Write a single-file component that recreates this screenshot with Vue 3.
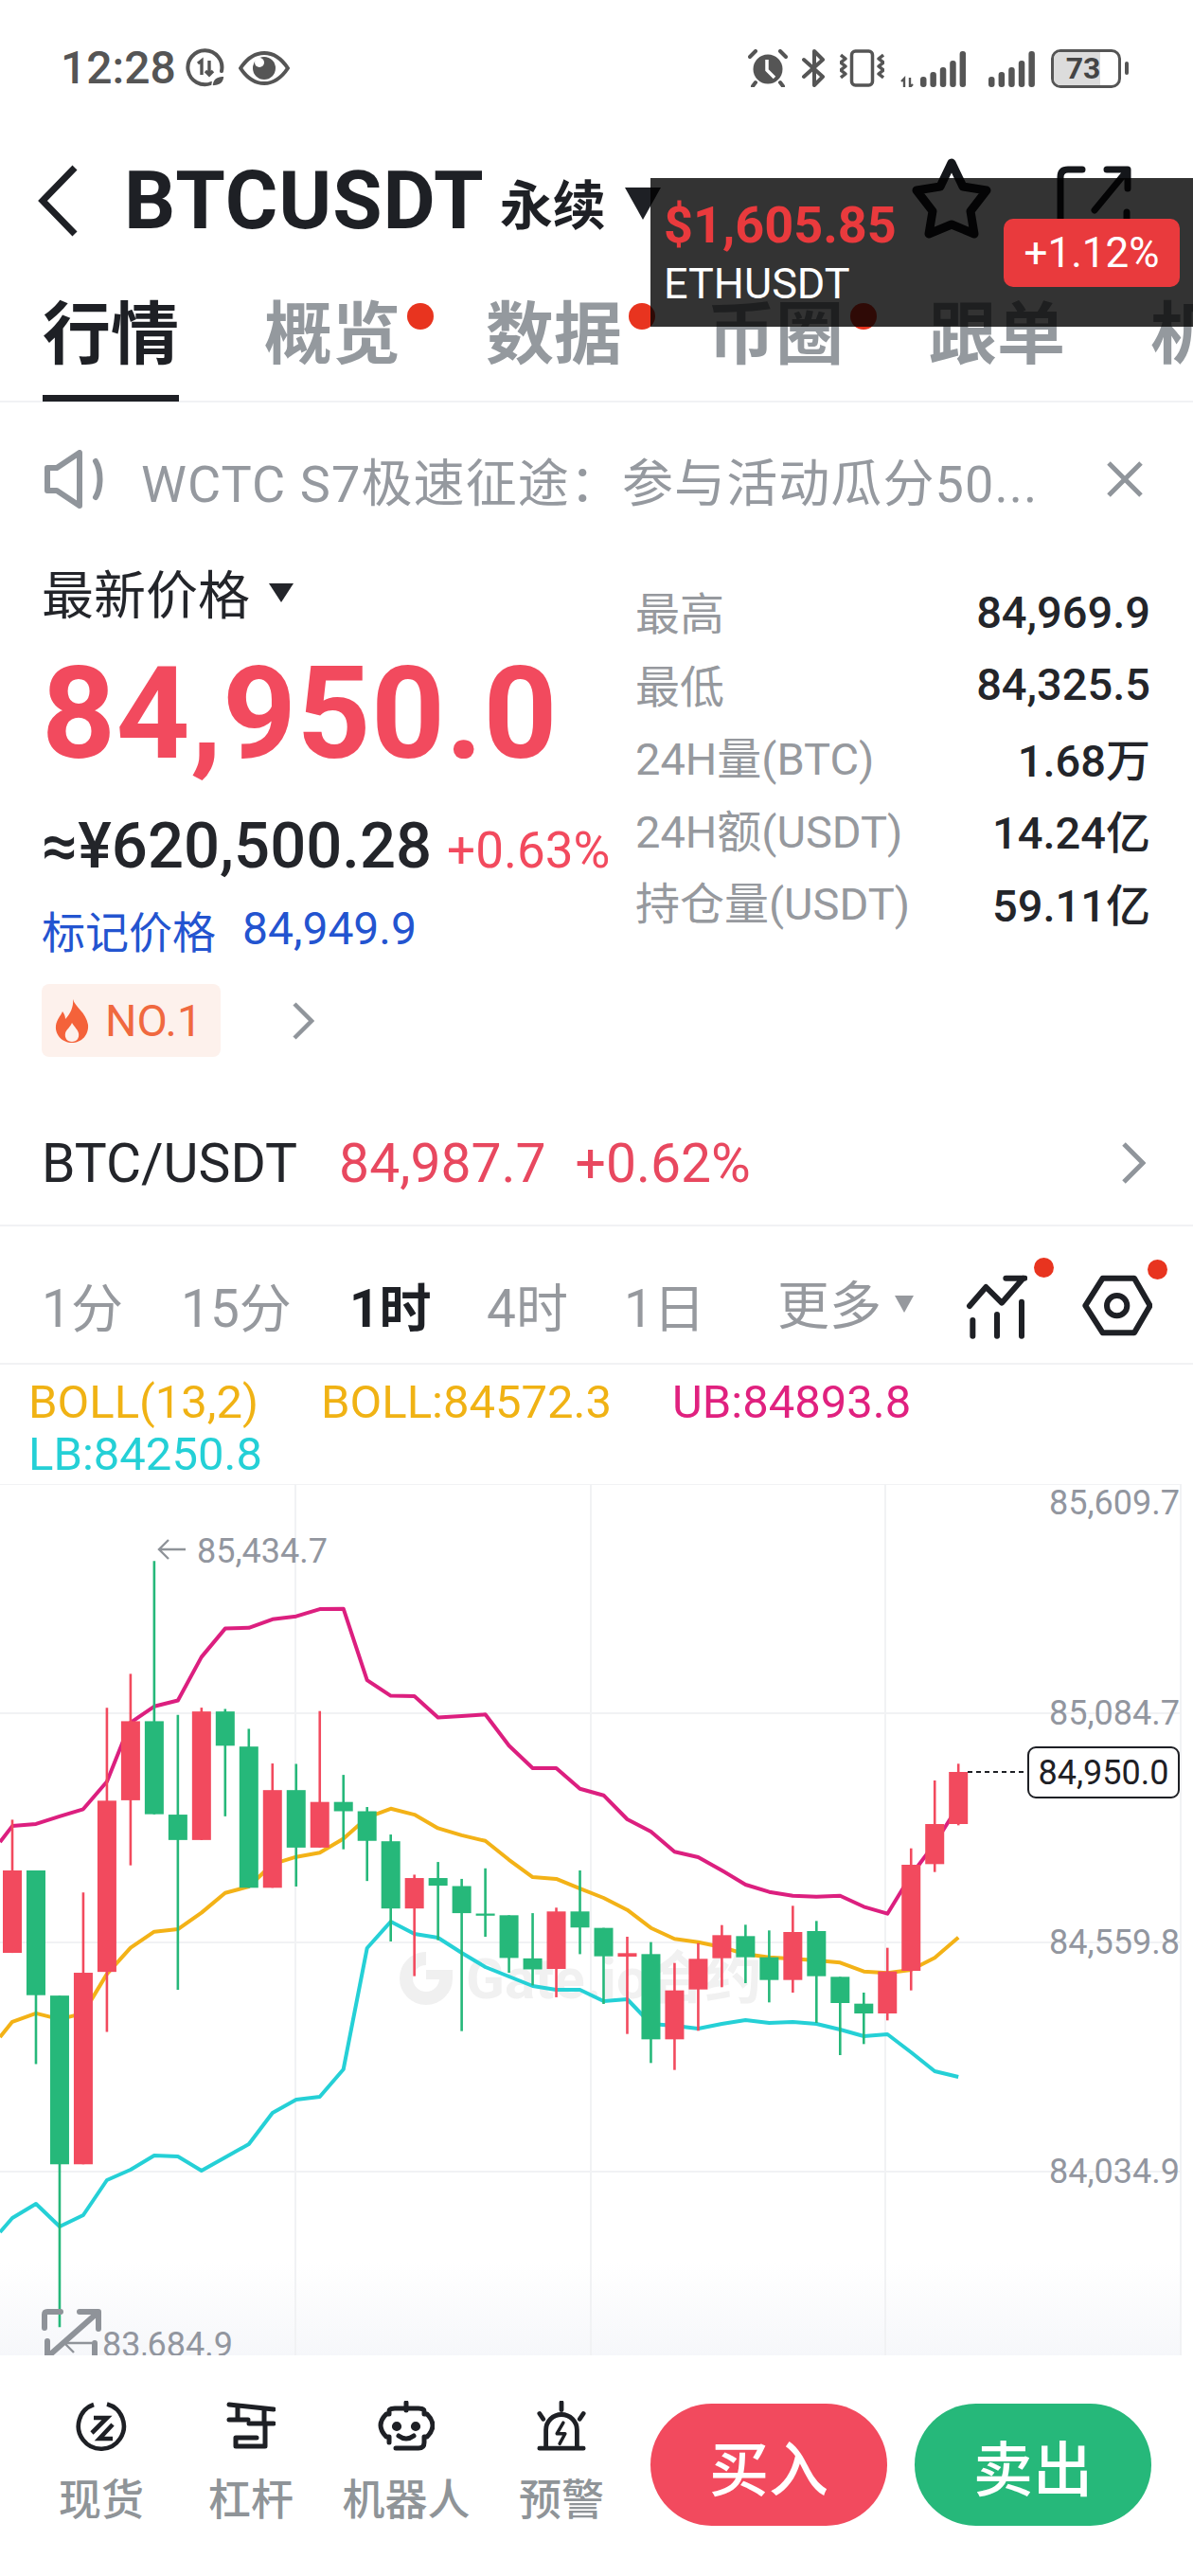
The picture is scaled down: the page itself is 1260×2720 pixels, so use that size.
<script setup>
const RED = '#f24a5e'
const GREEN = '#26b87a'
const z5 = (y) => 1600 + y / 2.24
const z6 = (y) => 1800 + y / 3

const raw5 = [
  ['r', 720, 840, 1035, 1035], ['g', 840, 840, 1135, 1298], ['g', 1136, 1136, 1535, 1920],
  ['r', 892, 1082, 1535, 1535], ['r', 455, 675, 1080, 1222], ['r', 375, 487, 674, 828],
  ['g', 108, 487, 707, 707], ['g', 472, 708, 768, 1122], ['r', 455, 464, 768, 768],
  ['g', 458, 464, 545, 712], ['g', 505, 547, 881, 881], ['r', 587, 650, 881, 881],
  ['g', 588, 650, 786, 878], ['r', 463, 678, 786, 786], ['g', 614, 678, 700, 790],
  ['g', 690, 700, 770, 865], ['g', 755, 771, 930, 1008], ['r', 850, 858, 930, 1090],
  ['g', 820, 858, 876, 1005], ['g', 860, 877, 941, 1220], ['g', 835, 942, 947, 997],
  ['g', 946, 946, 1047, 1082], ['g', 941, 1048, 1074, 1112], ['r', 928, 937, 1073, 1140],
  ['g', 840, 937, 975, 1038]
]
const raw6 = [
  ['g', 707, 707, 797, 948], ['r', 735, 787, 798, 1043], ['g', 752, 790, 1060, 1135],
  ['r', 818, 905, 1060, 1157], ['r', 755, 805, 902, 1033], ['r', 698, 730, 803, 895],
  ['g', 697, 733, 800, 882], ['g', 715, 800, 872, 943], ['r', 637, 720, 872, 912],
  ['g', 685, 717, 860, 1008], ['g', 862, 862, 945, 1110], ['g', 912, 947, 978, 1075],
  ['r', 770, 845, 978, 1000], ['r', 455, 507, 843, 905], ['r', 240, 378, 505, 530],
  ['r', 187, 213, 378, 382]
]
const toCandle = (row, i, conv) => ({
  x: 13 + i * 24.98,
  color: row[0] === 'r' ? RED : GREEN,
  top: conv(row[1]),
  bodyTop: conv(row[2]),
  bodyH: conv(row[3]) - conv(row[2]),
  bottom: conv(row[4])
})
const candles = [
  ...raw5.map((r, i) => toCandle(r, i, z5)),
  ...raw6.map((r, i) => toCandle(r, i + 25, z6))
]

const ubY = [
  ...[735, 730, 712, 695, 630, 490, 452, 438, 335, 268, 266, 246, 239, 222, 221, 390, 427, 428, 478, 475, 471, 545, 598, 598, 647].map(z5),
  ...[287, 363, 402, 466, 483, 525, 570, 593, 605, 608, 605, 640, 662, 540, 440, 320].map(z6)
]
const midY = [
  ...[1198, 1178, 1192, 1178, 1085, 1023, 985, 979, 940, 893, 878, 825, 808, 798, 765, 715, 694, 708, 740, 757, 770, 815, 856, 860, 883].map(z5),
  ...[612, 650, 707, 742, 752, 768, 790, 800, 805, 810, 817, 845, 850, 840, 802, 737].map(z6)
]
const lbY = [2342, 2327, 2351, 2339, 2302, 2291, 2276, 2277, 2292, 2278, 2264, 2231, 2217, 2214, 2185, 2057, 2029, 2042, 2046, 2062, 2077, 2087, 2097, 2101, 2101, 2113, 2111, 2137, 2139, 2142, 2137, 2133, 2136, 2135, 2137, 2143, 2150, 2148, 2167, 2187, 2193]
const toPoints = (ys, start) => start + ' ' + ys.map((y, i) => `${(13 + i * 24.98).toFixed(1)},${y.toFixed(1)}`).join(' ')
const ubPoints = toPoints(ubY, '0,1945')
const midPoints = toPoints(midY, '0,2151')
const lbPoints = toPoints(lbY, '0,2357')

const hLines = [1567, 1809, 2051, 2293]
const vLines = [312, 624, 935, 1247]
const axis = [
  { y: 1585, text: '85,609.7' },
  { y: 1807, text: '85,084.7' },
  { y: 2049, text: '84,559.8' },
  { y: 2291, text: '84,034.9' }
]
const tabs = [
  { label: '行情', active: true },
  { label: '概览', dot: true },
  { label: '数据', dot: true },
  { label: '币圈', dot: true },
  { label: '跟单' },
  { label: '机构' }
]
const stats = [
  ['最高', '84,969.9'],
  ['最低', '84,325.5'],
  ['24H量(BTC)', '1.68万'],
  ['24H额(USDT)', '14.24亿'],
  ['持仓量(USDT)', '59.11亿']
]
const frames = [
  { label: '1分', w: 147 },
  { label: '15分', w: 178 },
  { label: '1时', w: 145, active: true },
  { label: '4时', w: 145 },
  { label: '1日', w: 162 }
]
const signalBars = [11, 16, 21, 28, 38]
</script>

<template>
  <div class="page">
    <div class="status">
      <span class="time">12:28</span>
      <svg class="ic-sync" width="42" height="42" viewBox="0 0 42 42" fill="none" stroke="#555">
        <path d="M27 37A18 18 0 1 1 38 24" stroke-width="4" stroke-linecap="round" />
        <path d="M13 16l4-3v15M25 13v15M21 24l4 4 4-4" stroke-width="3.4" />
        <path d="M28 40c0-8 5-11 13-11 0 8-5 11-13 11z" fill="#555" stroke="#fff" stroke-width="1.5" />
      </svg>
      <svg class="ic-eye" width="54" height="36" viewBox="0 0 54 36" fill="none">
        <path d="M2 18C10 6 18 2 27 2s17 4 25 16c-8 12-16 16-25 16S10 30 2 18z" stroke="#555" stroke-width="4" />
        <circle cx="27" cy="18" r="12" fill="#555" />
        <circle cx="22" cy="12" r="5" fill="#fff" />
      </svg>
      <div class="status-right">
        <svg width="42" height="40" viewBox="0 0 42 40" fill="none">
          <circle cx="21" cy="21" r="15.5" fill="#555" />
          <path d="M20 11v11l8 8" stroke="#fff" stroke-width="3.5" />
          <path d="M2 8l6-6M40 8l-6-6M8 35l-3 4M34 35l3 4" stroke="#555" stroke-width="4" stroke-linecap="round" />
        </svg>
        <svg class="gap-bt" width="26" height="40" viewBox="0 0 26 40" fill="none" stroke="#555" stroke-width="4" stroke-linejoin="round" stroke-linecap="round">
          <path d="M3 11l20 18-9 9V2l9 9L3 29" />
        </svg>
        <svg class="gap-vib" width="47" height="40" viewBox="0 0 47 40" fill="none" stroke="#555" stroke-width="3.5" stroke-linejoin="round">
          <rect x="12.5" y="2" width="22" height="36" rx="4" />
          <path d="M1 6l5 4-5 4 5 4-5 4 5 4-5 4" />
          <path d="M46 6l-5 4 5 4-5 4 5 4-5 4 5 4" />
        </svg>
        <svg class="gap-sig" width="69" height="40" viewBox="0 0 69 40" fill="#555">
          <path d="M4 40V31L1 34M4 31l0 9M10 30v10l3-3" fill="none" stroke="#555" stroke-width="2.4" />
          <rect v-for="(h, i) in signalBars" :key="i" :x="21 + i * 10.4" :y="40 - h" width="6.5" :height="h" rx="3" />
        </svg>
        <svg class="gap-sig2" width="50" height="40" viewBox="0 0 50 40" fill="#555">
          <rect v-for="(h, i) in signalBars" :key="i" :x="i * 10.6" :y="40 - h" width="6.5" :height="h" rx="3" />
        </svg>
        <div class="battery">
          <div class="battery-fill"></div>
          <span class="battery-num">73</span>
        </div>
        <div class="battery-nub"></div>
      </div>
    </div>

    <div class="header">
      <svg class="back" width="44" height="76" viewBox="0 0 44 76" fill="none" stroke="#1e2025" stroke-width="7">
        <path d="M39 3L5 38l34 35" />
      </svg>
      <span class="symbol">BTCUSDT</span>
      <span class="perp">永续</span>
      <span class="perp-caret"></span>
      <svg class="star" width="94" height="90" viewBox="0 0 94 90" fill="none" stroke="#14161a" stroke-width="9" stroke-linejoin="round">
        <path d="M47 9L35 34l-25 4 17 22-4 24 24-10 24 10-4-24 17-22-25-4z" />
      </svg>
      <svg class="share" width="82" height="84" viewBox="0 0 82 84" fill="none" stroke="#14161a" stroke-width="7" stroke-linecap="round" stroke-linejoin="round">
        <path d="M27 5H12q-8 0-8 8v68M40 48L73 8M53 5h22v20M74 50v30" />
      </svg>
    </div>

    <div class="tabs">
      <div v-for="t in tabs" :key="t.label" class="tab" :class="{ 'tab-active': t.active }">
        {{ t.label }}
        <i v-if="t.dot" class="tab-dot"></i>
      </div>
    </div>

    <div class="notice">
      <svg width="68" height="62" viewBox="0 0 68 62" fill="none" stroke="#90959b" stroke-width="6" stroke-linejoin="round" stroke-linecap="round">
        <path d="M3 19h10L37 3v56L13 43H3z" />
        <path d="M54 12c6 10 6 28 0 38" />
      </svg>
      <span class="notice-text">WCTC S7极速征途：参与活动瓜分50...</span>
      <svg class="notice-x" width="40" height="40" viewBox="0 0 40 40" fill="none" stroke="#90959b" stroke-width="5">
        <path d="M3 3l34 34M37 3L3 37" />
      </svg>
    </div>

    <div class="price">
      <div class="price-left">
        <div class="latest">最新价格<i class="caret"></i></div>
        <div class="big">84,950.0</div>
        <div class="cny"><span class="cny-val">≈¥620,500.28</span><span class="cny-pct">+0.63%</span></div>
        <div class="mark"><span class="mark-k">标记价格</span><span class="mark-v">84,949.9</span></div>
        <div class="rank">
          <div class="tag">
            <svg width="36" height="46" viewBox="0 0 36 46" fill="#f4623a">
              <path d="M19 0c2 8 14 14 16 27 1 11-7 19-17 19S0 38 1 28c1-7 5-10 7-15 2 3 3 5 3 8 5-5 9-13 8-21zM18 45c5 0 8-4 7-9-1-4-4-6-7-11-2 5-6 7-7 11-1 5 2 9 7 9z" fill-rule="evenodd" />
            </svg>
            <span>NO.1</span>
          </div>
          <svg class="rank-chev" width="24" height="40" viewBox="0 0 24 40" fill="none" stroke="#90959b" stroke-width="4.5">
            <path d="M3 2l18 18L3 38" />
          </svg>
        </div>
      </div>
      <div class="price-right">
        <div v-for="s in stats" :key="s[0]" class="stat">
          <span class="stat-k">{{ s[0] }}</span>
          <span class="stat-v">{{ s[1] }}</span>
        </div>
      </div>
    </div>

    <div class="pair">
      <span class="pair-name">BTC/USDT</span>
      <span class="pair-val">84,987.7</span>
      <span class="pair-pct">+0.62%</span>
      <svg class="pair-chev" width="26" height="44" viewBox="0 0 26 44" fill="none" stroke="#90959b" stroke-width="5">
        <path d="M3 2l20 20L3 42" />
      </svg>
    </div>

    <div class="frames">
      <span v-for="f in frames" :key="f.label" class="frame" :class="{ 'frame-active': f.active }" :style="{ width: f.w + 'px' }">{{ f.label }}</span>
      <span class="more">更多<i class="more-caret"></i></span>
      <div class="tool tool-chart">
        <svg width="66" height="70" viewBox="55 80 198 210" fill="none" stroke="#1e2025" stroke-width="18" stroke-linecap="round" stroke-linejoin="round">
          <path d="M70 185l52-60 50 50 68-78M185 97h60M80 230v50M157 212v68M235 172v108" />
        </svg>
        <i class="tool-dot dot-a"></i>
      </div>
      <div class="tool tool-hex">
        <svg width="74" height="66" viewBox="425 85 222 196" fill="none" stroke="#1e2025" stroke-width="18" stroke-linejoin="round">
          <path d="M435 182l55-87h100l50 87-50 86H490z" />
          <circle cx="535" cy="182" r="32" />
        </svg>
        <i class="tool-dot dot-b"></i>
      </div>
    </div>

    <div class="legend">
      <div class="legend-row">
        <span class="c-y w-a">BOLL(13,2)</span>
        <span class="c-y w-b">BOLL:84572.3</span>
        <span class="c-p">UB:84893.8</span>
      </div>
      <div class="legend-row"><span class="c-c">LB:84250.8</span></div>
    </div>

    <svg class="chart" width="1260" height="920" viewBox="0 1567 1260 920">
      <defs>
        <linearGradient id="fade" x1="0" y1="0" x2="0" y2="1">
          <stop offset="0" stop-color="#ffffff" />
          <stop offset="1" stop-color="#f6f7fa" />
        </linearGradient>
      </defs>
      <rect x="0" y="2390" width="1248" height="97" fill="url(#fade)" />
      <line v-for="y in hLines" :key="'h' + y" x1="0" x2="1247" :y1="y" :y2="y" stroke="#f1f2f4" stroke-width="2" />
      <line v-for="x in vLines" :key="'v' + x" :x1="x" :x2="x" y1="1567" y2="2487" stroke="#f1f2f4" stroke-width="2" />

      <circle cx="450" cy="2089" r="21" fill="none" stroke="#f0f0f0" stroke-width="14" />
      <rect x="450" y="2060" width="30" height="28" fill="#fff" />
      <rect x="450" y="2080" width="28" height="10" fill="#f0f0f0" />
      <text class="wm" x="492" y="2110">Gate.io合约</text>

      <polyline :points="midPoints" fill="none" stroke="#f3b217" stroke-width="4" stroke-linejoin="round" />
      <polyline :points="ubPoints" fill="none" stroke="#dc1f7f" stroke-width="4" stroke-linejoin="round" />
      <polyline :points="lbPoints" fill="none" stroke="#25d0d6" stroke-width="4" stroke-linejoin="round" />

      <g v-for="(c, i) in candles" :key="i">
        <line :x1="c.x" :x2="c.x" :y1="c.top" :y2="c.bottom" :stroke="c.color" stroke-width="2.6" />
        <rect :x="c.x - 10" :y="c.bodyTop" width="20" :height="c.bodyH" :fill="c.color" />
      </g>

      <text v-for="a in axis" :key="a.text" class="axis" x="1246" :y="a.y + 14" text-anchor="end">{{ a.text }}</text>

      <path d="M196 1636h-28M178 1626l-10 10 10 10" fill="none" stroke="#8f9399" stroke-width="2.4" />
      <text class="axis" x="208" y="1650">85,434.7</text>

      <line x1="1022" x2="1086" y1="1871" y2="1871" stroke="#1e2025" stroke-width="2" stroke-dasharray="5 4" />
      <rect x="1086" y="1845" width="159" height="53" rx="8" fill="#fff" stroke="#1e2025" stroke-width="2" />
      <text class="tag-price" x="1165.5" y="1884" text-anchor="middle">84,950.0</text>

      <path d="M47 2458v-14q0-3 3-3h14M84 2441h20v18M103 2442L52 2487M50 2472v15M100 2474v13" fill="none" stroke="#8f9399" stroke-width="6" stroke-linecap="round" stroke-linejoin="round" />
      <path d="M97 2474H68M78 2464l-10 10 10 10" fill="none" stroke="#8f9399" stroke-width="2.4" />
      <text class="axis" x="108" y="2488">83,684.9</text>
    </svg>

    <div class="bottom">
      <div class="act act-a">
        <svg width="56" height="54" viewBox="0 0 56 54" fill="none" stroke="#1e2025" stroke-width="4.6">
          <path d="M34 3.5A24 24 0 1 1 20 4" />
          <path d="M20 18h14L18 34M40 25L26 40h14" />
        </svg>
        <span>现货</span>
      </div>
      <div class="act act-b">
        <svg width="52" height="54" viewBox="0 0 52 54" fill="none" stroke="#1e2025" stroke-width="5" stroke-linejoin="round" stroke-linecap="round">
          <path d="M3 4l47 5M12 6v14M3 20h20M40 8v16M24 24h26M41 24v24H10v-9h22" />
        </svg>
        <span>杠杆</span>
      </div>
      <div class="act act-c">
        <svg width="60" height="54" viewBox="0 0 60 54" fill="none" stroke="#1e2025" stroke-width="5" stroke-linejoin="round" stroke-linecap="round">
          <path d="M30 2v8M19 50h24q6 0 6-6v-6h3q6-6 6-12t-6-12h-3v-3q0-3-6-3H18q-6 0-6 3v3H9q-6 6-6 12t6 12h3v6" />
          <circle cx="20" cy="27" r="2.6" fill="#1e2025" />
          <circle cx="40" cy="27" r="2.6" fill="#1e2025" />
          <path d="M22 37q8 6 16 0" />
        </svg>
        <span>机器人</span>
      </div>
      <div class="act act-d">
        <svg width="54" height="54" viewBox="0 0 54 56" fill="none" stroke="#1e2025" stroke-width="5" stroke-linejoin="round" stroke-linecap="round">
          <path d="M27 2v8M3 14l4 6M51 14l-4 6" />
          <path d="M10 50V32a17 17 0 0 1 34 0v18M3 52h48" />
          <path d="M29 24l-7 12h9l-6 11" stroke-width="3.6" />
        </svg>
        <span>预警</span>
      </div>
      <div class="trade">
        <div class="btn btn-buy">买入</div>
        <div class="btn btn-sell">卖出</div>
      </div>
    </div>

    <div class="float">
      <div class="float-left">
        <div class="float-price">$1,605.85</div>
        <div class="float-name">ETHUSDT</div>
      </div>
      <div class="float-badge">+1.12%</div>
    </div>
  </div>
</template>

<style scoped>
.page {
  position: relative;
  width: 1260px;
  height: 2720px;
  overflow: hidden;
  background: #fff;
  color: #1e2025;
  font-family: Roboto, "Noto Sans CJK SC", sans-serif;
}
i { display: block; font-style: normal; }

.status { height: 144px; display: flex; align-items: center; padding-left: 64px; color: #555; }
.time { font-size: 48px; font-weight: 500; letter-spacing: 0; line-height: 1; }
.ic-sync { margin-left: 10px; }
.ic-eye { margin-left: 14px; }
.status-right { margin-left: auto; padding-right: 68px; display: flex; align-items: center; }
.gap-bt { margin-left: 14px; }
.gap-vib { margin-left: 15px; }
.gap-sig { margin-left: 17px; }
.gap-sig2 { margin-left: 24px; }
.battery {
  position: relative;
  margin-left: 16px;
  width: 74px;
  height: 41px;
  box-sizing: border-box;
  border: 3px solid #555;
  border-radius: 10px;
  overflow: hidden;
  display: flex;
  align-items: center;
  justify-content: center;
}
.battery-fill { position: absolute; left: 0; top: 0; bottom: 0; width: 72%; background: #dcdcdc; }
.battery-num { position: relative; font-size: 32px; font-weight: 700; color: #444; padding-right: 6px; }
.battery-nub { width: 4px; height: 14px; margin-left: 4px; border-radius: 2px; background: #555; }

.header { height: 136px; display: flex; align-items: center; padding-left: 40px; }
.symbol { margin-left: 47px; font-size: 85px; font-weight: 700; line-height: 1; letter-spacing: 1px; }
.perp { margin-left: 16px; font-size: 56px; font-weight: 700; }
.perp-caret {
  margin: 6px 0 0 20px;
  width: 0;
  height: 0;
  border-left: 19px solid transparent;
  border-right: 19px solid transparent;
  border-top: 34px solid #1e2025;
}
.star { margin-left: 260px; margin-top: -8px; }
.share { margin-left: 64px; margin-top: 8px; }

.tabs {
  height: 145px;
  box-sizing: border-box;
  display: flex;
  gap: 90px;
  padding-left: 45px;
  border-bottom: 2px solid #f1f2f4;
  white-space: nowrap;
}
.tab {
  position: relative;
  flex: none;
  height: 144px;
  box-sizing: border-box;
  font-size: 72px;
  line-height: 148px;
  color: #94999e;
  font-weight: 700;
}
.tab-active { color: #1e2025; border-bottom: 7px solid #1e2025; }
.tab-dot {
  position: absolute;
  right: -35px;
  top: 40px;
  width: 28px;
  height: 28px;
  border-radius: 50%;
  background: #e8341f;
}

.notice { height: 162px; display: flex; align-items: center; padding: 0 52px 0 47px; }
.notice-text { margin-left: 34px; font-size: 54px; color: #95999f; white-space: nowrap; letter-spacing: 1.1px; }
.notice-x { margin-left: auto; }

.price { height: 576px; display: flex; padding-left: 44px; box-sizing: border-box; }
.price-left { width: 627px; flex: none; padding-top: 3px; }
.latest { height: 78px; font-size: 55px; line-height: 78px; display: flex; align-items: center; color: #23252a; }
.caret {
  margin: 0 0 6px 20px;
  width: 0;
  height: 0;
  border-left: 13px solid transparent;
  border-right: 13px solid transparent;
  border-top: 20px solid #23252a;
}
.big { height: 172px; font-size: 136px; font-weight: 700; line-height: 172px; color: #f24a5e; white-space: nowrap; letter-spacing: 0.5px; }
.cny { height: 106px; display: flex; align-items: baseline; white-space: nowrap; line-height: 106px; }
.cny-val { font-size: 67px; font-weight: 500; color: #23252a; }
.cny-pct { margin-left: 16px; font-size: 53px; color: #f24a5e; }
.mark { height: 69px; display: flex; align-items: center; gap: 28px; color: #2354d0; }
.mark-k { font-size: 46px; }
.mark-v { font-size: 48px; }
.rank { margin-top: 24px; display: flex; align-items: center; }
.tag {
  width: 189px;
  height: 77px;
  box-sizing: border-box;
  padding-left: 14px;
  display: flex;
  align-items: center;
  gap: 17px;
  background: #fdf1ec;
  border-radius: 8px;
  color: #f0693f;
  font-size: 47px;
}
.rank-chev { margin-left: 75px; }
.price-right { flex: none; width: 544px; padding-top: 21px; }
.stat { height: 76.5px; display: flex; align-items: center; justify-content: space-between; font-size: 47px; white-space: nowrap; }
.stat-k { color: #96999e; margin-top: -3px; }
.stat-v { color: #23252a; font-weight: 500; }

.pair { height: 132px; box-sizing: border-box; border-bottom: 2px solid #f1f2f4; display: flex; align-items: center; padding: 0 50px 0 44px; font-size: 57px; white-space: nowrap; }
.pair-name { color: #23252a; }
.pair-val { margin-left: 44px; color: #e8485f; }
.pair-pct { margin-left: 31px; color: #e8485f; }
.pair-chev { margin-left: auto; }

.frames { height: 146px; box-sizing: border-box; border-bottom: 2px solid #f1f2f4; display: flex; align-items: center; padding: 20px 0 0 44px; }
.frame { flex: none; font-size: 55px; color: #96999e; white-space: nowrap; }
.frame-active { color: #1e2025; font-weight: 700; }
.more { display: flex; align-items: center; font-size: 55px; color: #96999e; white-space: nowrap; margin-top: -6px; }
.more-caret {
  margin: 6px 0 0 14px;
  width: 0;
  height: 0;
  border-left: 10px solid transparent;
  border-right: 10px solid transparent;
  border-top: 18px solid #96999e;
}
.tool { position: relative; flex: none; display: flex; margin-top: 4px; }
.tool-chart { margin-left: 54px; }
.tool-hex { margin-left: 58px; }
.tool-dot { position: absolute; width: 21px; height: 21px; border-radius: 50%; background: #e8341f; top: -16px; }
.dot-a { left: 73px; }
.dot-b { left: 69px; }

.legend { height: 126px; box-sizing: border-box; padding: 12px 0 0 30px; font-size: 49px; }
.legend-row { height: 55px; line-height: 55px; display: flex; white-space: nowrap; }
.w-a { width: 309px; }
.w-b { width: 371px; }
.c-y { color: #f0b214; }
.c-p { color: #e0217f; }
.c-c { color: #24d0d6; }

.chart { display: block; }
.axis { font-size: 36px; fill: #92969f; }
.tag-price { font-size: 36px; fill: #1e2025; }
.wm { font-size: 60px; font-weight: 700; fill: #f1f1f1; }

.bottom { height: 231px; position: relative; display: flex; background: #fff; }
.act { position: absolute; top: 48px; display: flex; flex-direction: column; align-items: center; font-size: 45px; color: #8f9498; font-weight: 500; white-space: nowrap; }
.act span { line-height: 60px; margin-top: 22px; }
.act-a { left: 62px; width: 90px; }
.act-b { left: 220px; width: 90px; }
.act-c { left: 360px; width: 138px; }
.act-d { left: 548px; width: 90px; }
.trade { margin-left: 687px; margin-top: 51px; display: flex; gap: 29px; }
.btn { width: 250px; height: 129px; border-radius: 65px; display: flex; align-items: center; justify-content: center; font-size: 63px; color: #fff; font-weight: 500; }
.btn-buy { background: #f24a5e; }
.btn-sell { background: #26b87a; }

.float {
  position: absolute;
  left: 687px;
  top: 188px;
  width: 573px;
  height: 157px;
  box-sizing: border-box;
  padding-left: 14px;
  background: rgba(0, 0, 0, 0.8);
  display: flex;
}
.float-price { margin-top: 22px; font-size: 54px; font-weight: 700; color: #e93a3d; line-height: 56px; white-space: nowrap; }
.float-name { margin-top: 9px; font-size: 45px; color: #fff; line-height: 50px; }
.float-badge {
  position: absolute;
  left: 373px;
  top: 43px;
  width: 186px;
  height: 72px;
  border-radius: 10px;
  background: #e93a3d;
  color: #fff;
  font-size: 44px;
  display: flex;
  align-items: center;
  justify-content: center;
}
</style>
